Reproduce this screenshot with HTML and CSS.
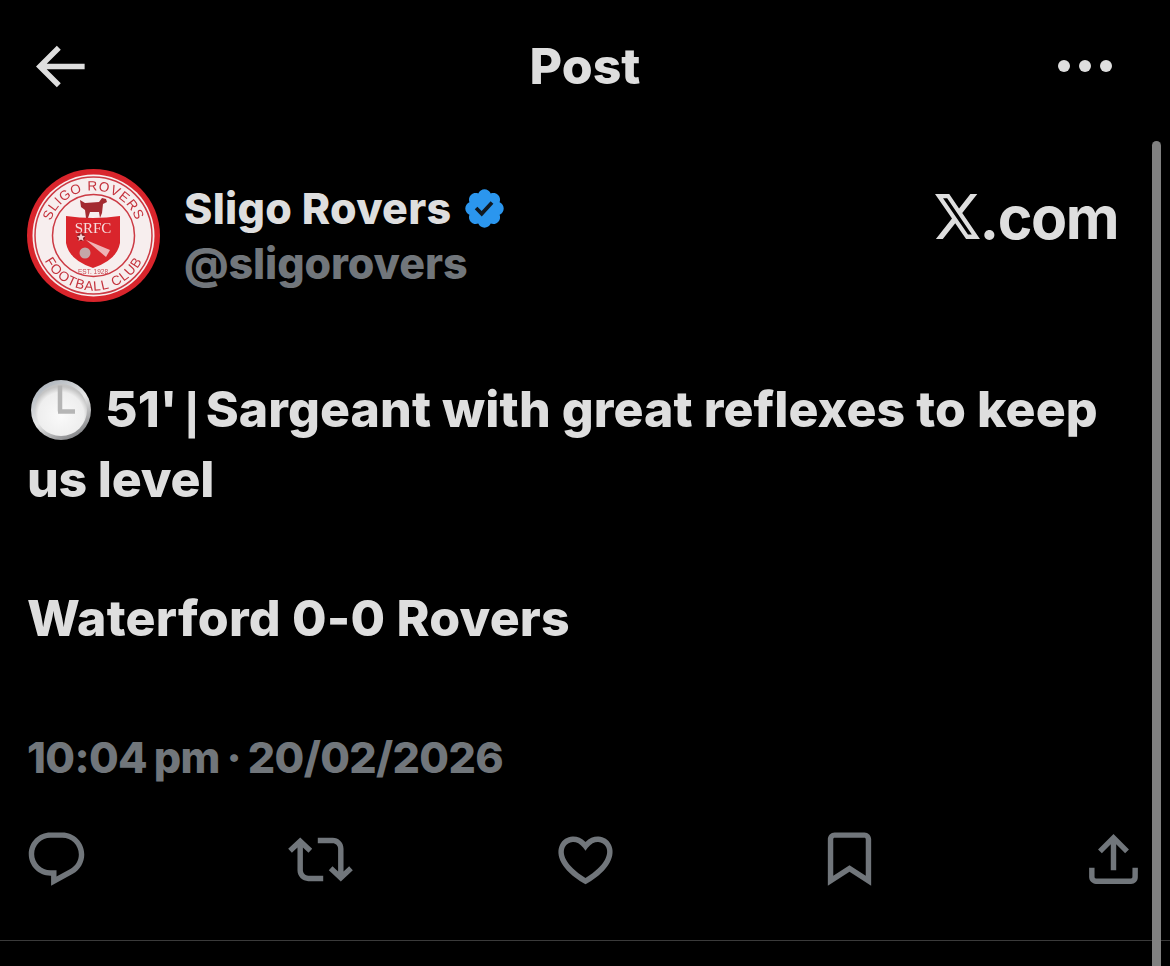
FILE: index.html
```html
<!DOCTYPE html>
<html lang="en">
<head>
<meta charset="utf-8">
<title>Post</title>
<link rel="stylesheet" href="styles.css">
</head>
<body>
<main class="screen">
  <header class="topbar">
    <svg class="back" viewBox="0 0 24 24"><path d="M7.414 13l5.043 5.04-1.414 1.42L3.586 12l7.457-7.46 1.414 1.42L7.414 11H21v2H7.414z"/></svg>
    <h1 class="title">Post</h1>
    <div class="dots"><span class="dot"></span><span class="dot"></span><span class="dot"></span></div>
  </header>

  <section class="author">
    <svg class="crest" viewBox="0 0 133 133">
      <defs>
        <path id="arcTop" d="M21.500 66.500a45 45 0 0 1 90 0"/>
        <path id="arcBottom" d="M11.500 66.500a55 55 0 0 0 110 0"/>
      </defs>
      <circle cx="66.500" cy="66.500" r="66.500" class="c-red"/>
      <circle cx="66.500" cy="66.500" r="61" class="c-white"/>
      <circle cx="66.500" cy="66.500" r="58.500" class="c-line"/>
      <circle cx="66.500" cy="66.500" r="41" class="c-line"/>
      <text class="c-arc"><textPath href="#arcTop" startOffset="50%" text-anchor="middle">SLIGO ROVERS</textPath></text>
      <text class="c-arc"><textPath href="#arcBottom" startOffset="50%" text-anchor="middle">FOOTBALL CLUB</textPath></text>
      <path class="c-bull" d="M53 31l5 3 14-1 3-4 4 1 1 3-4 2-1 9-2 5-1-6-9 0-2 6-2 0-1-8-4-3z"/>
      <path class="c-red" d="M39 47q27 4 54 0v27q-3 17-27 25q-24-8-27-25z"/>
      <text class="c-srfc" x="66" y="64" text-anchor="middle">SRFC</text>
      <path class="c-band" d="M59 71l24 10-4 7z"/>
      <circle class="c-star-bg" cx="54" cy="68" r="4"/>
      <path class="c-star" d="M54 64l1.200 2.800 3 .3-2.300 2 .7 3-2.600-1.600-2.600 1.600.7-3-2.300-2 3-.3z"/>
      <circle class="c-ball" cx="58" cy="84" r="5.500"/>
      <text class="c-est" x="66" y="105" text-anchor="middle">EST. 1928</text>
    </svg>
    <div class="names">
      <div class="name-row">
        <span class="name">Sligo Rovers</span>
        <svg class="badge" viewBox="0 0 22 22"><path class="badge-bg" d="M20.396 11c-.018-.646-.215-1.275-.57-1.816-.354-.54-.852-.972-1.438-1.246.223-.607.27-1.264.14-1.897-.131-.634-.437-1.218-.882-1.687-.47-.445-1.053-.75-1.687-.882-.633-.13-1.29-.083-1.897.14-.273-.587-.704-1.086-1.245-1.44S11.647 1.62 11 1.604c-.646.017-1.273.213-1.813.568s-.969.854-1.24 1.44c-.608-.223-1.267-.272-1.902-.14-.635.13-1.22.436-1.69.882-.445.47-.749 1.055-.878 1.688-.13.633-.08 1.29.144 1.896-.587.274-1.087.705-1.443 1.245-.356.54-.555 1.17-.574 1.817.02.647.218 1.276.574 1.817.356.54.856.972 1.443 1.245-.224.606-.274 1.263-.144 1.896.13.634.433 1.218.877 1.688.47.443 1.054.747 1.687.878.633.132 1.29.084 1.897-.136.274.586.705 1.084 1.246 1.439.54.354 1.17.551 1.816.569.647-.016 1.276-.213 1.817-.567s.972-.854 1.245-1.44c.604.239 1.266.296 1.903.164.636-.132 1.22-.447 1.68-.907.46-.46.776-1.044.908-1.681s.075-1.299-.165-1.903c.586-.274 1.084-.705 1.439-1.246.354-.54.551-1.17.569-1.816z"/><path class="badge-tick" d="M9.662 14.85l-3.429-3.428 1.293-1.302 2.072 2.072 4.4-4.794 1.347 1.246z"/></svg>
      </div>
      <div class="handle">@sligorovers</div>
    </div>
    <div class="brand">
      <svg class="x-mark" viewBox="1.25 2.25 21.6 19.5" preserveAspectRatio="none"><path d="M18.244 2.25h3.308l-7.227 8.26 8.502 11.24H16.17l-5.214-6.817L4.99 21.75H1.68l7.73-8.835L1.254 2.25H8.08l4.713 6.231zm-1.161 17.52h1.833L7.084 4.126H5.117z"/></svg><span class="brand-text">.com</span>
    </div>
  </section>

  <article class="post">
    <p class="post-line post-line-first"><svg class="clock" viewBox="0 0 60 60">
      <defs>
        <linearGradient id="bezel" x1="0.2" y1="0" x2="0.8" y2="1"><stop offset="0" stop-color="#a9b0b8"/><stop offset="0.5" stop-color="#e8e8e8"/><stop offset="1" stop-color="#77787b"/></linearGradient>
        <radialGradient id="face" cx="0.5" cy="0.6" r="0.55"><stop offset="0" stop-color="#fafafa"/><stop offset="0.8" stop-color="#eeeeee"/><stop offset="1" stop-color="#c4c4c4"/></radialGradient>
      </defs>
      <circle cx="30" cy="30.500" r="30" fill="url(#bezel)"/>
      <circle cx="30" cy="30.500" r="26" fill="url(#face)"/>
      <path class="clock-hands" d="M29 32V6M27 32H44"/>
    </svg> 51'<span class="sep"> | </span>Sargeant with great reflexes to keep</p>
    <p class="post-line">us level</p>
    <p class="post-line">&nbsp;</p>
    <p class="post-line post-line-wide">Waterford 0-0 Rovers</p>
  </article>

  <div class="stamp">10:04 pm · 20/02/2026</div>

  <nav class="actions">
    <svg class="action" viewBox="0 0 24 24"><path d="M1.751 10c0-4.42 3.584-8 8.005-8h4.366c4.49 0 8.129 3.64 8.129 8.13 0 2.96-1.607 5.68-4.196 7.11l-8.054 4.46v-3.69h-.067c-4.49.1-8.183-3.51-8.183-8.01zm8.005-6c-3.317 0-6.005 2.69-6.005 6 0 3.37 2.77 6.08 6.138 6.01l.351-.01h1.761v2.3l5.087-2.81c1.951-1.08 3.163-3.13 3.163-5.36 0-3.39-2.744-6.13-6.129-6.13H9.756z"/></svg>
    <svg class="action" viewBox="0 0 24 24"><path d="M4.5 3.88l4.432 4.14-1.364 1.46L5.5 7.55V16c0 1.1.896 2 2 2H13v2H7.5c-2.209 0-4-1.79-4-4V7.55L1.432 9.48.068 8.02 4.5 3.88zM16.5 6H11V4h5.5c2.209 0 4 1.79 4 4v8.45l2.068-1.93 1.364 1.46-4.432 4.14-4.432-4.14 1.364-1.46 2.068 1.93V8c0-1.1-.896-2-2-2z"/></svg>
    <svg class="action" viewBox="0 0 24 24"><path d="M16.697 5.5c-1.222-.06-2.679.51-3.89 2.16l-.805 1.09-.806-1.09C9.984 6.01 8.526 5.44 7.304 5.5c-1.243.07-2.349.78-2.91 1.91-.552 1.12-.633 2.78.479 4.82 1.074 1.97 3.257 4.27 7.129 6.61 3.87-2.34 6.052-4.64 7.126-6.61 1.111-2.04 1.03-3.7.477-4.82-.561-1.13-1.666-1.84-2.908-1.91zm4.187 7.69c-1.351 2.48-4.001 5.12-8.379 7.67l-.503.3-.504-.3c-4.379-2.55-7.029-5.19-8.382-7.67-1.36-2.5-1.41-4.86-.514-6.67.887-1.79 2.647-2.91 4.601-3.01 1.651-.09 3.368.56 4.798 2.01 1.429-1.45 3.146-2.1 4.796-2.01 1.954.1 3.714 1.22 4.601 3.01.896 1.81.846 4.17-.514 6.67z"/></svg>
    <svg class="action" viewBox="0 0 24 24"><path d="M4 4.500C4 3.120 5.119 2 6.500 2h11C18.881 2 20 3.120 20 4.500v17.200l-8-5.200-8 5.200V4.500zM6.500 4c-.276 0-.5.220-.5.500v13.500l6-3.900 6 3.900V4.500c0-.280-.224-.500-.500-.500h-11z"/></svg>
    <svg class="action" viewBox="0 0 24 24"><path d="M12 2.590l5.700 5.700-1.410 1.420L13 6.410V16h-2V6.410l-3.300 3.300-1.410-1.420L12 2.590zM21 15l-.020 3.510c0 1.380-1.120 2.490-2.500 2.490H5.500C4.110 21 3 19.880 3 18.500V15h2v3.500c0 .280.220.500.500.500h12.980c.280 0 .500-.220.500-.500L19 15h2z"/></svg>
  </nav>

  <hr class="divider">
  <div class="scrollbar"></div>
</main>
</body>
</html>
```
FILE: styles.css
```css
* { box-sizing: border-box; }

html, body {
  margin: 0;
  padding: 0;
  background: #000;
}

.screen {
  position: relative;
  width: 1170px;
  height: 966px;
  overflow: hidden;
  background: #000;
  color: #dedede;
  font-family: Inter, "Liberation Sans", sans-serif;
  font-weight: 800;
}

.topbar {
  display: grid;
  grid-template-columns: 1fr auto 1fr;
  align-items: center;
  height: 132px;
  padding: 0 26px;
}

.back { width: 67px; height: 67px; fill: #dedede; }

.title {
  margin: 0;
  font-size: 50px;
  font-weight: 800;
  line-height: 56px;
  letter-spacing: 0;
}

.dots {
  display: flex;
  justify-content: flex-end;
  gap: 9px;
  padding-right: 32px;
}

.dot {
  width: 12px;
  height: 12px;
  border-radius: 50%;
  background: #dedede;
}

.author {
  display: flex;
  align-items: flex-start;
  height: 133px;
  margin-top: 37px;
  padding: 0 52px 0 27px;
}

.crest { width: 133px; height: 133px; flex: none; filter: blur(.4px); }
.c-red { fill: #d9252c; }
.c-white { fill: #f7eeee; }
.c-line { fill: none; stroke: #cc3a44; stroke-width: 1.500; }
.c-arc {
  font-family: "Liberation Sans", sans-serif;
  font-size: 13.500px;
  font-weight: 400;
  fill: #c4323c;
  letter-spacing: .8px;
}
.c-bull { fill: #a32a30; }
.c-srfc {
  font-family: "Liberation Serif", serif;
  font-size: 15px;
  font-weight: 400;
  fill: #f6dcdc;
}
.c-band { fill: #efb3b6; }
.c-star-bg { fill: #8c1c22; }
.c-star { fill: #f1d0d0; }
.c-ball { fill: #c4a8a8; }
.c-est {
  font-family: "Liberation Sans", sans-serif;
  font-size: 6.500px;
  font-weight: 400;
  fill: #c9464f;
}

.names {
  margin-left: 24px;
  margin-top: 11px;
}

.name-row {
  display: flex;
  align-items: center;
  gap: 11px;
  height: 56px;
}

.name {
  font-size: 43px;
  letter-spacing: .25px;
  line-height: 54px;
}

.badge { width: 45px; height: 45px; }
.badge-bg { fill: #2b96ee; }
.badge-tick { fill: #101820; }

.handle {
  font-size: 43px;
  line-height: 54px;
  letter-spacing: -.1px;
  color: #71767b;
}

.brand {
  display: flex;
  align-items: baseline;
  margin-left: auto;
  margin-top: 19px;
}

.x-mark { width: 45px; height: 45px; fill: #dedede; }

.brand-text {
  font-size: 59px;
  font-weight: 700;
  line-height: 60px;
  letter-spacing: -1.500px;
}

.post { margin: 73px 0 0; padding: 0 27px; }

.post-line {
  margin: 0;
  font-size: 50px;
  line-height: 69.500px;
  letter-spacing: -.2px;
  white-space: nowrap;
}

.post-line-first { letter-spacing: .08px; }

.post-line-wide { letter-spacing: .2px; }

.sep {
  font-family: "Liberation Sans", sans-serif;
  font-weight: 700;
  line-height: 1;
  word-spacing: -7px;
}

.clock {
  width: 60px;
  height: 61px;
  margin: 0 3px 0 4px;
  vertical-align: -13px;
}

.clock-hands {
  fill: none;
  stroke: #b5b5b5;
  stroke-width: 4.500;
}

.stamp {
  margin-top: 79px;
  padding-left: 27px;
  font-size: 43px;
  line-height: 50px;
  letter-spacing: -.65px;
  word-spacing: -2px;
  color: #71767b;
}

.actions {
  display: flex;
  justify-content: space-between;
  margin-top: 45px;
  padding: 0 24px;
}

.action { width: 65px; height: 65px; fill: #71767b; }

.divider {
  margin: 48px 0 0;
  border: 0;
  border-top: 1px solid #3a3a3a;
}

.scrollbar {
  position: absolute;
  top: 141px;
  right: 9px;
  bottom: -10px;
  width: 9px;
  border-radius: 5px;
  background: #808080;
}
```
